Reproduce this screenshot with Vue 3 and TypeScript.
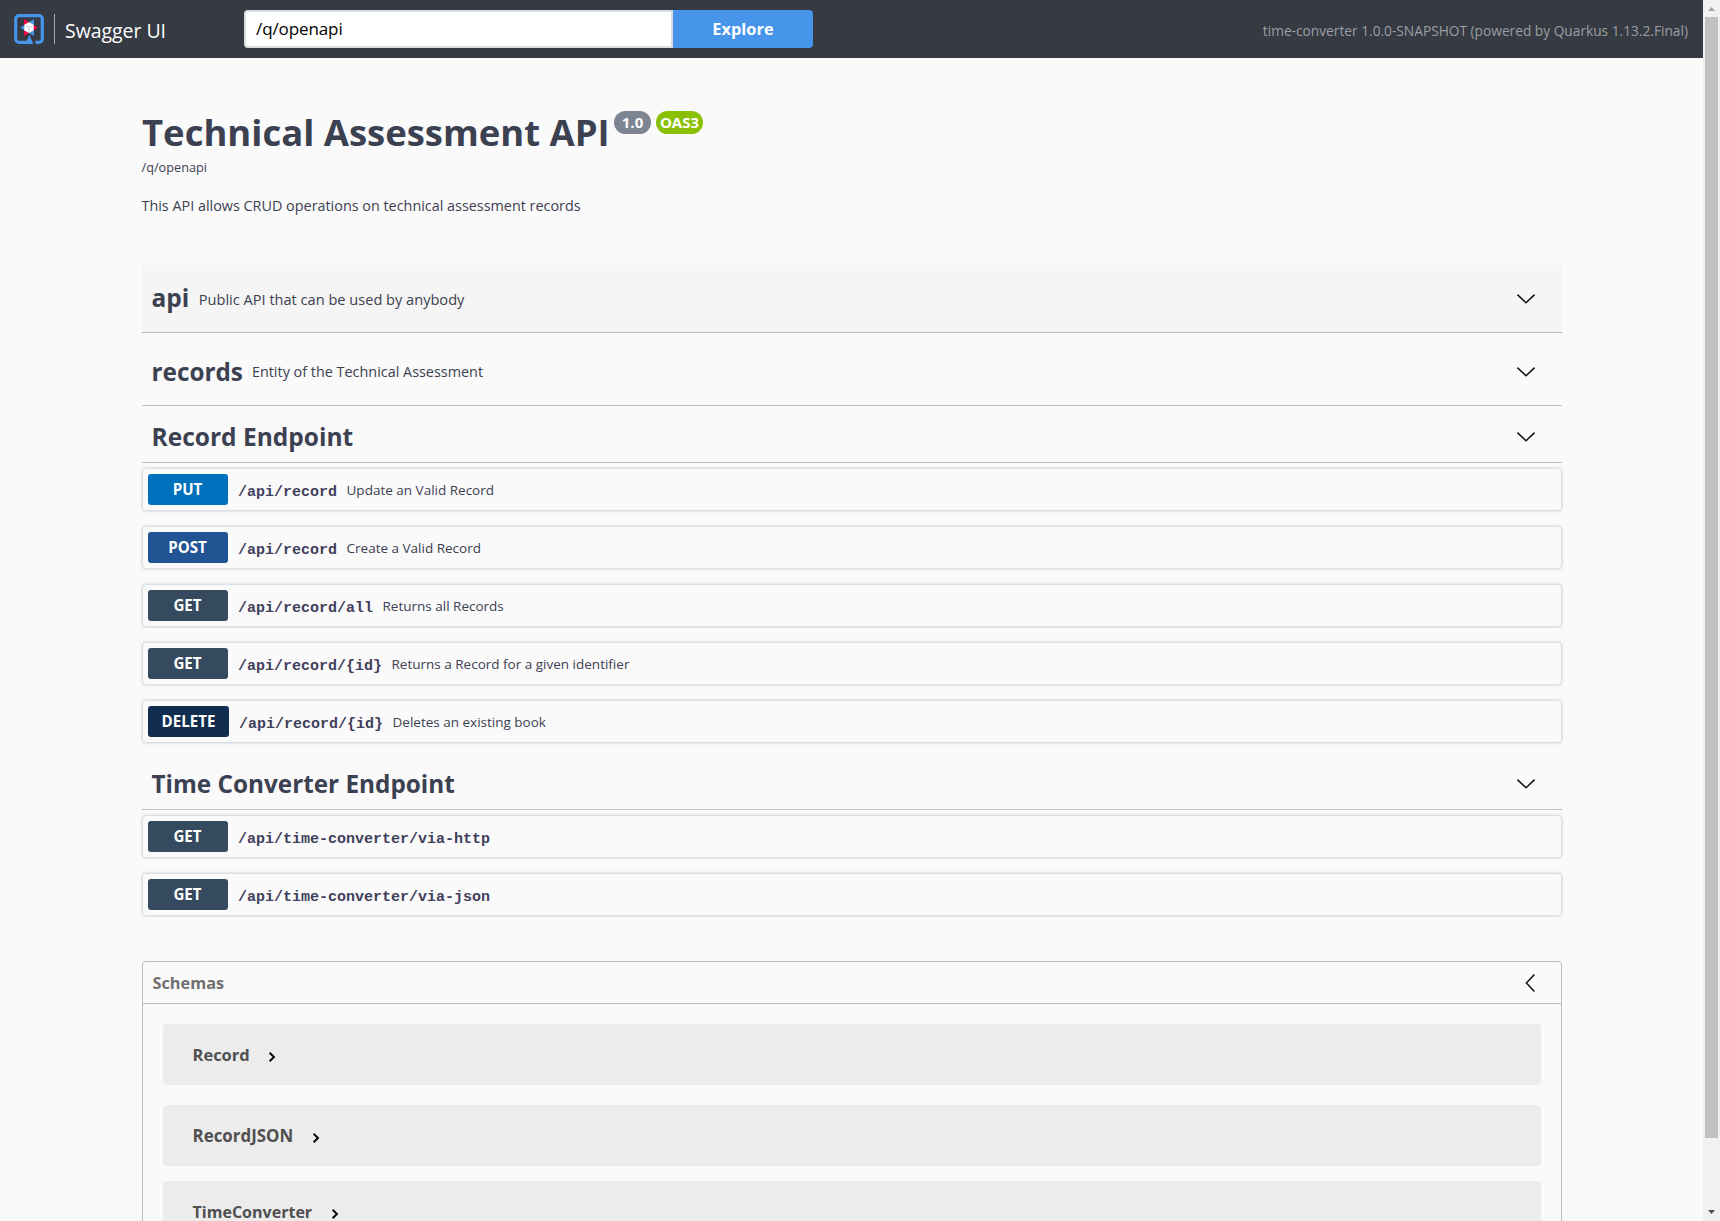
<script setup lang="ts">
interface Operation {
  method: 'put' | 'post' | 'get' | 'delete'
  path: string
  summary?: string
}

interface Tag {
  name: string
  kind: string
  description?: string
  operations: Operation[]
}

const tags: Tag[] = [
  { name: 'api', kind: 'api', description: 'Public API that can be used by anybody', operations: [] },
  { name: 'records', kind: 'records', description: 'Entity of the Technical Assessment', operations: [] },
  {
    name: 'Record Endpoint',
    kind: 'record-endpoint',
    operations: [
      { method: 'put', path: '/api/record', summary: 'Update an Valid Record' },
      { method: 'post', path: '/api/record', summary: 'Create a Valid Record' },
      { method: 'get', path: '/api/record/all', summary: 'Returns all Records' },
      { method: 'get', path: '/api/record/{id}', summary: 'Returns a Record for a given identifier' },
      { method: 'delete', path: '/api/record/{id}', summary: 'Deletes an existing book' },
    ],
  },
  {
    name: 'Time Converter Endpoint',
    kind: 'time-endpoint',
    operations: [
      { method: 'get', path: '/api/time-converter/via-http' },
      { method: 'get', path: '/api/time-converter/via-json' },
    ],
  },
]

const schemas = ['Record', 'RecordJSON', 'TimeConverter']
</script>

<template>
  <div class="window">
    <div class="page">
      <header class="topbar">
        <svg class="logo" width="30" height="30" viewBox="0 0 30 30">
          <path
            d="M20.5 28.3H25a3.3 3.3 0 0 0 3.3-3.3V5A3.3 3.3 0 0 0 25 1.7H5A3.3 3.3 0 0 0 1.7 5v20A3.3 3.3 0 0 0 5 28.3H14"
            fill="none" stroke="#4695eb" stroke-width="3.2"
          />
          <path d="M15.4 20.5L19.4 30H11.4z" fill="#4695eb" />
          <path d="M19 26.2h1.6l1.5 3.8h-2.6z" fill="#363a42" />
          <path d="M10 5.2l5 2.9-5 2.9z M23.8 13.6l-5 2.9v-5.8z M10 22l0-5.8 5 2.9z" fill="#ff004a" />
          <path d="M20 5.2v5.8l-5-2.9z M6.2 13.6l5-2.9v5.8z M20 22l-5-2.9 5-2.9z" fill="#4695eb" />
          <path d="M15 8.1l4.7 2.7v5.6L15 19.1l-4.7-2.7v-5.6z" fill="#fff" />
          <path d="M10.8 11.2l4.2 2.4 4.2-2.4M15 13.6v5" fill="none" stroke="#a3abb6" stroke-width=".6" />
        </svg>
        <span class="divider"></span>
        <span class="brand">Swagger UI</span>
        <form class="explore" @submit.prevent>
          <span class="url">/q/openapi</span>
          <button class="go" type="submit">Explore</button>
        </form>
        <span class="app-info">time-converter 1.0.0-SNAPSHOT (powered by Quarkus 1.13.2.Final)</span>
      </header>

      <main class="content">
        <section class="info">
          <div class="title-row">
            <h1 class="title">Technical Assessment API</h1>
            <span class="pill version">1.0</span>
            <span class="pill oas">OAS3</span>
          </div>
          <a class="spec-link">/q/openapi</a>
          <p class="description">This API allows CRUD operations on technical assessment records</p>
        </section>

        <section v-for="tag in tags" :key="tag.name" class="tag" :class="tag.kind">
          <div class="tag-head">
            <h2 class="tag-name">{{ tag.name }}</h2>
            <p v-if="tag.description" class="tag-desc">{{ tag.description }}</p>
            <svg class="chevron" width="20" height="20" viewBox="0 0 20 20">
              <path d="M1.4 5.6L10 13.7l8.6-8.1" fill="none" stroke="#111" stroke-width="1.5" />
            </svg>
          </div>
          <div v-if="tag.operations.length" class="operations">
            <div v-for="(op, i) in tag.operations" :key="i" class="operation">
              <span class="method" :class="op.method">{{ op.method.toUpperCase() }}</span>
              <span class="path">{{ op.path }}</span>
              <span v-if="op.summary" class="summary">{{ op.summary }}</span>
            </div>
          </div>
        </section>

        <section class="models">
          <div class="models-head">
            <h3 class="models-title">Schemas</h3>
            <svg class="collapse" width="20" height="20" viewBox="0 0 20 20">
              <path d="M14.4 1.4L6.4 10l8 8.6" fill="none" stroke="#111" stroke-width="1.5" />
            </svg>
          </div>
          <div class="models-body">
            <div v-for="name in schemas" :key="name" class="model" :class="name">
              <span class="model-name">{{ name }}</span>
              <svg class="arrow" width="8" height="12" viewBox="0 0 8 12">
                <path d="M1.6 1.7L6 6 1.6 10.3" fill="none" stroke="#000" stroke-width="1.9" />
              </svg>
            </div>
          </div>
        </section>
      </main>
    </div>

    <div class="scrollbar">
      <svg class="up" width="17" height="17" viewBox="0 0 17 17"><path d="M5 11l3.5-4 3.5 4z" fill="#a3a3a3" /></svg>
      <div class="thumb"></div>
      <svg class="down" width="17" height="17" viewBox="0 0 17 17"><path d="M5 6l3.5 4L12 6z" fill="#505050" /></svg>
    </div>
  </div>
</template>

<style>
body {
  background: #fafafa;
}
</style>

<style scoped>
.window {
  display: flex;
  width: 1720px;
  height: 1221px;
  overflow: hidden;
  background: #fafafa;
  color: #3b4151;
  font-family: 'Open Sans', 'Noto Sans', sans-serif;
  white-space: nowrap;
}
.window * {
  box-sizing: border-box;
}
h1, h2, h3, p {
  margin: 0;
}
.page {
  width: 1703px;
  height: 1221px;
  overflow: hidden;
}
.topbar {
  display: flex;
  align-items: center;
  height: 58px;
  padding: 0 15px 0 14px;
  background: #363a42;
}
.divider {
  width: 1px;
  height: 30px;
  margin: 0 10px;
  background: #a9abae;
}
.brand {
  width: 179px;
  padding-top: 4px;
  color: #fff;
  font-size: 19.5px;
  letter-spacing: -0.05px;
  line-height: 24px;
}
.explore {
  display: flex;
  width: 569px;
  height: 38px;
}
.url {
  width: 429px;
  padding-left: 10px;
  border: 2px solid #d8dde0;
  border-radius: 4px 0 0 4px;
  background: #fff;
  color: #000;
  font-size: 17px;
  letter-spacing: -0.1px;
  line-height: 34px;
}
.go {
  width: 140px;
  padding: 0;
  border: 0;
  border-radius: 0 4px 4px 0;
  background: #4695eb;
  color: #fff;
  font: 700 16.4px/38px 'Open Sans', 'Noto Sans', sans-serif;
}
.app-info {
  margin-left: auto;
  padding-top: 4px;
  color: #9c9ea2;
  font-size: 13.73px;
  line-height: 20px;
}
.content {
  width: 1420px;
  margin-left: 142px;
}
.info {
  height: 207px;
  padding-top: 52px;
}
.title-row {
  display: flex;
  height: 44px;
}
.title {
  width: 472px;
  font-size: 36.46px;
  line-height: 44px;
  font-weight: 700;
}
.pill {
  height: 23px;
  margin-top: 1px;
  border-radius: 12px;
  color: #fff;
  font-size: 15px;
  font-weight: 700;
  line-height: 23px;
  text-align: center;
}
.version {
  width: 37px;
  background: #7d8492;
}
.oas {
  width: 47px;
  margin-left: 5px;
  background: #89bf04;
}
.spec-link {
  display: block;
  margin-left: -0.5px;
  padding-top: 3px;
  font-size: 12.72px;
  line-height: 20px;
}
.description {
  margin-top: 19px;
  margin-left: -0.5px;
  font-size: 14.38px;
  line-height: 20px;
}
.tag-head {
  display: flex;
  align-items: center;
  border-bottom: 1px solid #bcbec1;
  padding: 0 26px 0 9.5px;
}
.api .tag-head {
  height: 68px;
  background: #f5f5f5;
}
.records .tag-head {
  height: 73px;
  padding-top: 5px;
}
.record-endpoint .tag-head {
  height: 57px;
  padding-top: 5px;
}
.time-endpoint .tag-head {
  height: 52px;
}
.tag-name {
  font-size: 24.5px;
  line-height: 30px;
  font-weight: 700;
}
.api .tag-name {
  margin-top: -1px;
}
.records .tag-name {
  font-size: 24.3px;
}
.time-endpoint .tag-name {
  font-size: 24.3px;
}
.tag-desc {
  margin-left: 9.5px;
  font-size: 14.58px;
  line-height: 20px;
}
.records .tag-desc {
  margin-left: 9px;
  font-size: 14.4px;
}
.chevron {
  margin-left: auto;
}
.operations {
  padding-top: 5px;
}
.record-endpoint .operations {
  height: 295px;
}
.time-endpoint .operations {
  height: 151px;
}
.operation {
  display: flex;
  align-items: center;
  height: 43px;
  margin-bottom: 15px;
  padding: 5px;
  border: 1px solid #d9dfe2;
  border-radius: 4px;
  box-shadow: 0 0 3px rgba(0, 0, 0, 0.19);
}
.method {
  width: 80px;
  height: 31px;
  border-radius: 3px;
  color: #fff;
  font-size: 15.1px;
  font-weight: 700;
  line-height: 30px;
  text-align: center;
}
.put { background: #0071bc; }
.post { background: #205493; }
.get { background: #354a5f; }
.delete { width: 81px; background: #112e51; }
.put, .post, .get { text-indent: -1px; }
.path {
  margin-left: 10px;
  padding-top: 6px;
  color: #41405a;
  font: 700 15px/20px 'Liberation Mono', monospace;
}
.summary {
  margin-left: 9.5px;
  padding-top: 1px;
  font-size: 13.5px;
  line-height: 20px;
}
.models {
  height: 300px;
  border: 1px solid #bcbec1;
  border-radius: 4px;
}
.models-head {
  display: flex;
  align-items: center;
  justify-content: space-between;
  height: 42px;
  padding: 0 21px 0 9.5px;
  border-bottom: 1px solid #bcbec1;
}
.models-title {
  color: #707070;
  font-size: 16.3px;
  line-height: 20px;
  font-weight: 700;
}
.models-body {
  padding: 20px 20px 0;
}
.model {
  display: flex;
  align-items: center;
  height: 61px;
  margin-bottom: 20px;
  padding-left: 29.5px;
  border-radius: 4px;
  background: #ececec;
}
.RecordJSON { margin-bottom: 15px; }
.model-name {
  color: #505050;
  font-size: 16.5px;
  font-weight: 700;
  line-height: 20px;
}
.RecordJSON .model-name { font-size: 16.9px; }
.TimeConverter .model-name { font-size: 16.05px; }
.arrow {
  margin: 5px 0 0 18.5px;
}
.scrollbar {
  display: flex;
  flex-direction: column;
  width: 17px;
  background: #f1f1f1;
}
.thumb {
  width: 13px;
  height: 1121px;
  margin: 0 2px;
  background: #c1c1c1;
}
.down {
  margin-top: auto;
}
</style>
